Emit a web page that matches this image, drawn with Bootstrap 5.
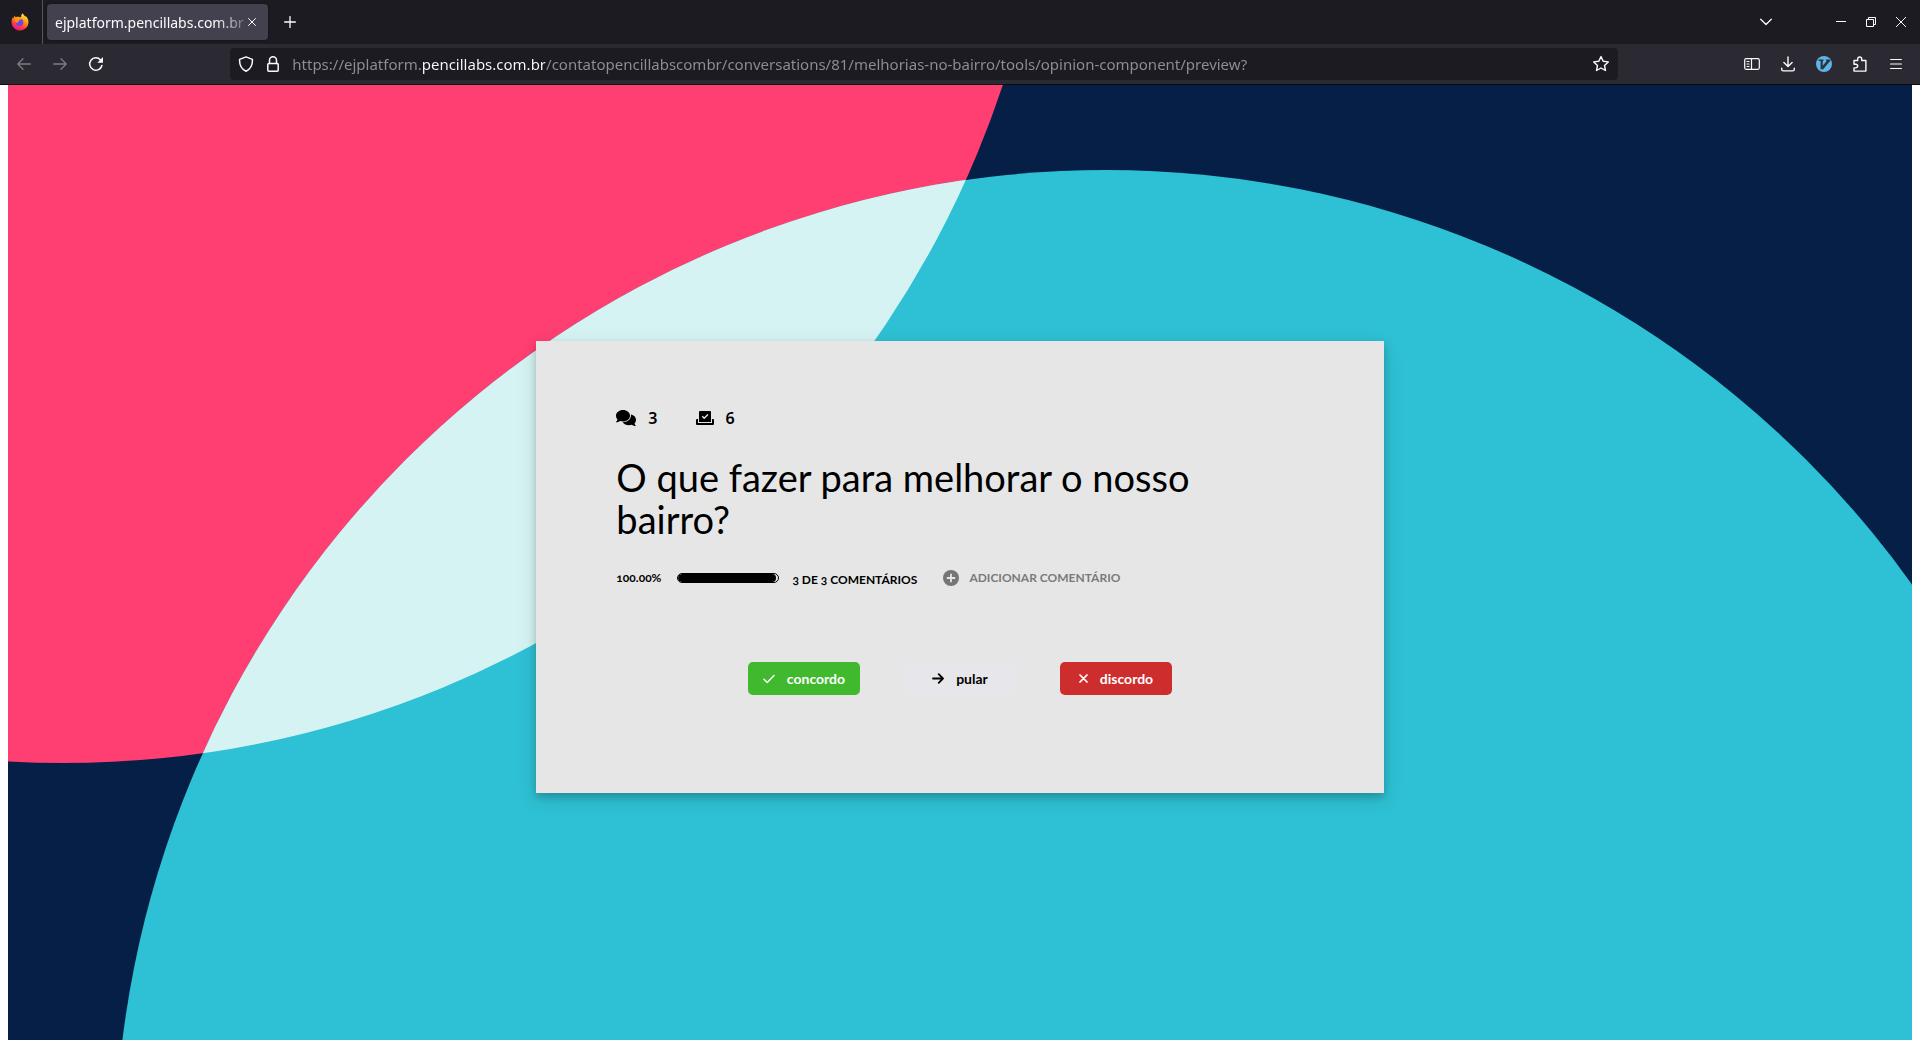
<!DOCTYPE html>
<html lang="pt-br">
<head>
<meta charset="utf-8">
<meta name="viewport" content="width=device-width, initial-scale=1">
<title>ejplatform.pencillabs.com.br</title>
<link href="https://cdn.jsdelivr.net/npm/bootstrap@5.3.0/dist/css/bootstrap.min.css" rel="stylesheet">
<style>
  body { font-family: "Noto Sans", sans-serif; background: #fff; }
  svg { display: block; flex: none; }
  .line-icon { fill: none; stroke: currentColor; stroke-linecap: round; stroke-linejoin: round; }

  /* browser chrome */
  .tab-strip { background: #1c1b22; height: 44px; color: #fbfbfe; padding-right: 4px; }
  .brand-cell { width: 43px; border-right: 1px solid #55545c; padding-right: 3px; }
  .page-tab { width: 221px; height: 36px; margin-left: 4px; padding: 0 11px 0 8px; background: #42414d; border-radius: 4px; box-shadow: 0 0 3px rgba(0,0,0,.4); font-size: 14px; }
  .tab-name { flex: 1 1 auto; white-space: nowrap; color: #fbfbfe; -webkit-mask-image: linear-gradient(to left, rgba(0,0,0,.2), #000 32px); mask-image: linear-gradient(to left, rgba(0,0,0,.2), #000 32px); }
  .chrome-btn { width: 36px; height: 32px; padding: 0; border: 0; background: transparent; color: #fbfbfe; display: flex; align-items: center; justify-content: center; }
  .chrome-btn:disabled { color: #7d7c83; }
  .tab-close { width: 10px; flex: none; }
  .list-tabs { margin-right: 42px; }
  .win-btn { width: 30px; }
  .tool-bar { background: #2b2a33; height: 41px; padding: 0 6px; border-bottom: 1px solid #0c0c0d; }
  .bar-gap { flex: 1 1 2px; }
  .url-box { flex: 12 1 0; height: 32px; padding: 0 8px; background: #1c1b22; border-radius: 4px; color: #fbfbfe; gap: 13px; }
  .url-input { flex: 1 1 0; min-width: 0; border: 0; outline: 0; padding: 0; font-size: 15px; line-height: 24px; color: transparent;
    background: linear-gradient(90deg, #8f8f96 129px, #fbfbfe 129px 253px, #8f8f96 253px); -webkit-background-clip: text; background-clip: text; }

  /* page */
  .scene { margin: 0 8px 8px; padding: 9px 0 0; background: #051f47; overflow: hidden; }
  .scene-art { position: absolute; inset: 0; width: 100%; height: 100%; }
  .vote-card { position: relative; width: 44.5%; min-width: 600px; padding: 65px 80px 98px; background: #e6e6e6; color: #000; font-family: Lato, sans-serif;
    box-shadow: 0 4px 8px rgba(0,0,0,.2), 0 6px 20px rgba(0,0,0,.1); }
  .stats { gap: 38px; }
  .stat { font: 600 16px/24px "Noto Sans", sans-serif; gap: 12px; }
  .question { font-size: 38px; line-height: 42px; font-weight: 400; max-width: 640px; margin: 26px 0 0; }
  .meta-row { margin-top: 26px; font-size: 12px; line-height: 20px; font-weight: 700; font-variant-numeric: oldstyle-nums; }
  .done-bar { width: 102px; height: 10px; margin: 0 13px 0 16px; border: 1px solid #000; border-radius: 5px; background: #e6e6e6; }
  .done-bar .progress-bar { background: #000; border-radius: 5px; }
  .add-link { margin-left: 26px; gap: 10px; color: #7a7a7a; }
  .votes { gap: 44px; margin-top: 72px; }
  .vote-btn { width: 112px; height: 33px; border: 0; border-radius: 5px; padding: 0; font-size: 14px; font-weight: 700; display: flex; align-items: center; justify-content: center; gap: 12px; color: #fff; }
  .vote-yes { background: #40b92e; }
  .vote-skip { background: #e7e7eb; color: #000; }
  .vote-no { background: #cd2d2d; }
</style>
</head>
<body class="d-flex flex-column min-vh-100">
<header>
  <div class="tab-strip d-flex align-items-center">
    <div class="brand-cell h-100 d-flex align-items-center justify-content-center">
      <svg width="18" height="18" viewBox="0 0 18 18" aria-hidden="true">
        <defs>
          <linearGradient id="fox" x1=".8" y1="0" x2=".3" y2="1"><stop offset="0" stop-color="#fff44f"/><stop offset=".4" stop-color="#ff980e"/><stop offset=".75" stop-color="#ff3647"/><stop offset="1" stop-color="#e31587"/></linearGradient>
        </defs>
        <path fill="url(#fox)" d="M1.8 4.2 2.6 5l1.1-2.4.9 1.6C6.200 3.600 8 3.700 8.800 4.200L10.200 4C10 2.400 10.500 1.100 12 .3c.2 1.500 1.300 2.200 2.400 3.300l.9-.2c1.300 1.500 2.300 3.600 2.200 5.900-.2 4.700-3.800 8.200-8.300 8.200C4.600 17.500.8 14 .6 9.400.5 7.500.9 5.700 1.800 4.200z"/>
        <circle cx="8.600" cy="9.400" r="3.700" fill="#7542e5"/>
        <path fill="#ff980e" d="M3.700 5.200c2-1 4-.6 4.900.4l2-.1c-.6 1.300-1.900 1.500-2.400 1.800.2 1.200-1.200 1.100-1.700 2.300-1.500.300-2.600-1-2.800-4.400z"/>
      </svg>
    </div>
    <div class="page-tab d-flex align-items-center">
      <span class="tab-name">ejplatform.pencillabs.com.br</span>
      <button class="chrome-btn tab-close" aria-label="Fechar aba"><svg class="line-icon" width="8" height="8" viewBox="0 0 8 8"><path d="M.5.5l7 7M7.500.5l-7 7"/></svg></button>
    </div>
    <button class="chrome-btn ms-1" aria-label="Nova aba"><svg class="line-icon" width="12" height="12" viewBox="0 0 12 12" stroke-width="1.300"><path d="M6 .6v10.800M.6 6h10.800"/></svg></button>
    <div class="d-flex ms-auto">
      <button class="chrome-btn list-tabs" aria-label="Listar abas"><svg class="line-icon" width="12" height="8" viewBox="0 0 12 8" stroke-width="1.300"><path d="M.7 1.200 6 6.500l5.300-5.300"/></svg></button>
      <button class="chrome-btn win-btn" aria-label="Minimizar"><svg width="10" height="10" viewBox="0 0 10 10"><path fill="currentColor" d="M0 4h10v1H0z"/></svg></button>
      <button class="chrome-btn win-btn" aria-label="Restaurar"><svg width="10" height="10" viewBox="0 0 10 10" fill="none" stroke="currentColor"><path d="M.5 2.500h7v7h-7zM2.500 2.500v-2h7v7h-2"/></svg></button>
      <button class="chrome-btn win-btn" aria-label="Fechar"><svg class="line-icon" width="10" height="10" viewBox="0 0 10 10"><path d="M.3.3l9.400 9.400M9.700.3.3 9.700"/></svg></button>
    </div>
  </div>
  <div class="tool-bar d-flex align-items-center">
    <button class="chrome-btn" disabled aria-label="Voltar"><svg class="line-icon" width="14" height="12" viewBox="0 0 14 12" stroke-width="1.300"><path d="M13.300 6H.8M6 .8.8 6 6 11.200"/></svg></button>
    <button class="chrome-btn" disabled aria-label="Avançar"><svg class="line-icon" width="14" height="12" viewBox="0 0 14 12" stroke-width="1.300"><path d="M.7 6h12.500M8 .8 13.200 6 8 11.200"/></svg></button>
    <button class="chrome-btn" aria-label="Recarregar"><svg class="line-icon" width="16" height="16" viewBox="0 0 16 16" stroke-width="1.500"><path d="M13.900 9.500A6.200 6.200 0 1 1 12.600 4"/><path fill="currentColor" stroke="none" d="M15 1v5.400a.4.4 0 0 1-.4.400H9.300z"/></svg></button>
    <div class="bar-gap"></div>
    <div class="url-box d-flex align-items-center">
      <svg class="line-icon" width="16" height="16" viewBox="0 0 16 16" stroke-width="1.500"><path d="M8 .9 14.400 3.400C14.700 8.700 12.800 13 8 15.200 3.200 13 1.300 8.700 1.600 3.400z"/></svg>
      <svg class="line-icon" width="12" height="16" viewBox="0 0 12 16" stroke-width="1.500"><rect x=".8" y="7.500" width="10.400" height="7.700" rx="1"/><path d="M2.500 7.500V4.300a3.500 3.500 0 0 1 7 0v3.200"/></svg>
      <input class="url-input" type="text" aria-label="Endereço" value="https://ejplatform.pencillabs.com.br/contatopencillabscombr/conversations/81/melhorias-no-bairro/tools/opinion-component/preview?">
      <svg class="line-icon" width="18" height="18" viewBox="0 0 18 18" stroke-width="1.400"><path d="M9 1.600 11.200 6.300l5.100.6-3.800 3.500 1 5.100L9 13l-4.500 2.500 1-5.100L1.700 6.900l5.100-.6z"/></svg>
    </div>
    <div class="bar-gap"></div>
    <button class="chrome-btn" aria-label="Painéis"><svg class="line-icon" width="16" height="12" viewBox="0 0 16 12" stroke-width="1.200"><rect x=".7" y=".7" width="14.600" height="10.600" rx="1.500"/><path d="M7.500.7v10.600M3 3.500h2M3 6h2M3 8.500h2"/></svg></button>
    <button class="chrome-btn" aria-label="Downloads"><svg class="line-icon" width="14" height="16" viewBox="0 0 14 16" stroke-width="1.400"><path d="M7 .9v9.600M2.900 6.500 7 10.600l4.100-4.100M.7 12.300v1a1.600 1.600 0 0 0 1.600 1.600h9.400a1.600 1.600 0 0 0 1.600-1.600v-1"/></svg></button>
    <button class="chrome-btn" aria-label="Vimium"><svg width="16" height="16" viewBox="0 0 16 16"><circle cx="8" cy="8" r="8" fill="#5eb5e6"/><path fill="#2b3440" d="M2.500 3.500h5v1.300l-.8.3v4.700l4-4.700-.7-.3V3.500h4.300v1.300l-7.100 8.500H4.600V5.100l-2.100-.3z"/></svg></button>
    <button class="chrome-btn" aria-label="Extensões"><svg class="line-icon" width="14" height="16" viewBox="0 0 14 16" stroke-width="1.400"><path d="M1 7V4.500h3.700V3a2 2 0 0 1 4 0v1.500h4.200v10.600H1v-3.200h1.800a1.800 1.800 0 0 0 0-3.700H1z"/></svg></button>
    <button class="chrome-btn" aria-label="Menu"><svg class="line-icon" width="12" height="12" viewBox="0 0 12 12" stroke-width="1.200"><path d="M.6 1.500h10.800M.6 6h10.800M.6 10.500h10.800"/></svg></button>
  </div>
</header>

<main class="scene position-relative flex-grow-1 d-flex align-items-center justify-content-center">
  <svg class="scene-art" viewBox="0 0 1904 955" preserveAspectRatio="xMidYMid slice" aria-hidden="true">
    <defs><clipPath id="pinkDisc"><circle cx="56" cy="-311" r="989"/></clipPath></defs>
    <circle cx="56" cy="-311" r="989" fill="#ff3e72"/>
    <circle cx="1098" cy="1076" r="991" fill="#2ec0d4"/>
    <circle cx="1098" cy="1076" r="991" fill="#d5f3f2" clip-path="url(#pinkDisc)"/>
  </svg>
  <section class="vote-card">
    <div class="stats d-flex">
      <div class="stat d-flex align-items-center">
        <svg width="20" height="16" viewBox="0 0 20 16" aria-hidden="true"><path d="M7 0c3.900 0 7 2.600 7 5.700s-3.100 5.800-7 5.800c-1.100 0-2.100-.2-3-.5-1 .7-2.300 1.300-3.800 1.300-.2 0-.3-.3-.1-.5.7-.7 1.200-1.600 1.400-2.400C.6 8.400 0 7.100 0 5.700 0 2.600 3.100 0 7 0z"/><path d="M14.900 4.500c2.900.5 5.100 2.700 5.100 5.300 0 1.400-.6 2.700-1.500 3.700.2.800.7 1.500 1.300 2.200.2.100.1.400-.1.400-1.500 0-2.800-.6-3.800-1.300-.9.300-1.900.5-2.900.5-2.800 0-5.200-1.300-6.300-3.100l.3 0c4.400 0 8-3 8-6.700 0-.3 0-.7-.1-1z"/></svg>
        <span>3</span>
      </div>
      <div class="stat d-flex align-items-center">
        <svg width="18" height="14" viewBox="0 0 18 14" aria-hidden="true"><path d="M3 1a1 1 0 0 1 1-1h10a1 1 0 0 1 1 1v10H3z"/><path d="M1 8h1v4h14V8h1a1 1 0 0 1 1 1v4a1 1 0 0 1-1 1H1a1 1 0 0 1-1-1V9a1 1 0 0 1 1-1z"/><path d="M6.300 5.300 8.200 7.300l3.700-3.900" fill="none" stroke="#e6e6e6" stroke-width="1.400"/></svg>
        <span>6</span>
      </div>
    </div>
    <h1 class="question">O que fazer para melhorar o nosso bairro?</h1>
    <div class="meta-row d-flex align-items-center">
      <span>100.00%</span>
      <div class="progress done-bar" role="progressbar" aria-label="Comentários votados" aria-valuenow="100" aria-valuemin="0" aria-valuemax="100"><div class="progress-bar" style="width:98%"></div></div>
      <span class="pt-1">3 DE 3 COMENTÁRIOS</span>
      <a href="#" class="add-link d-flex align-items-center text-decoration-none">
        <svg width="16" height="16" viewBox="0 0 16 16" aria-hidden="true"><circle cx="8" cy="8" r="8" fill="#757575"/><path d="M8 4.500v7M4.500 8h7" stroke="#e6e6e6" stroke-width="1.800" stroke-linecap="round"/></svg>
        <span>ADICIONAR COMENTÁRIO</span>
      </a>
    </div>
    <div class="votes d-flex justify-content-center">
      <button class="vote-btn vote-yes"><svg class="line-icon" width="12" height="10" viewBox="0 0 12 10" stroke-width="1.500"><path d="M1 5.300 4.200 8.500 11 1.500"/></svg>concordo</button>
      <button class="vote-btn vote-skip"><svg class="line-icon" width="12" height="11" viewBox="0 0 12 11" stroke-width="1.800"><path d="M1 5.500h10M6.700 1.200 11 5.500 6.700 9.800"/></svg>pular</button>
      <button class="vote-btn vote-no"><svg class="line-icon" width="9" height="9" viewBox="0 0 9 9" stroke-width="1.700"><path d="M1 1l7 7M8 1 1 8"/></svg>discordo</button>
    </div>
  </section>
</main>
<script src="https://cdn.jsdelivr.net/npm/bootstrap@5.3.0/dist/js/bootstrap.bundle.min.js"></script>
</body>
</html>
